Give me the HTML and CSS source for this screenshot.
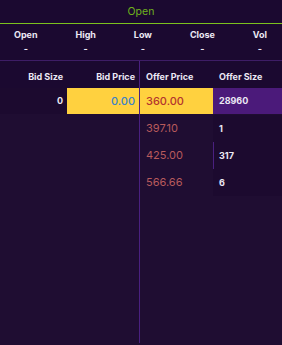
FILE: index.html
```html
<!DOCTYPE html>
<html lang="en">

<head>
    <meta charset="UTF-8">
    <meta name="viewport" content="width=device-width, initial-scale=1.0">
    <title>Order book</title>
    <link rel="stylesheet" href="styles.css">
</head>

<body>
    <div class="panel">
        <div class="status">Open</div>

        <div class="ohlc">
            <div class="stat"><span class="stat-label">Open</span><span class="stat-value">-</span></div>
            <div class="stat"><span class="stat-label">High</span><span class="stat-value">-</span></div>
            <div class="stat"><span class="stat-label">Low</span><span class="stat-value">-</span></div>
            <div class="stat"><span class="stat-label">Close</span><span class="stat-value">-</span></div>
            <div class="stat"><span class="stat-label">Vol</span><span class="stat-value">-</span></div>
        </div>

        <div class="book">
            <div class="side bids">
                <div class="head">Bid Size</div>
                <div class="head">Bid Price</div>

                <div class="cell size">0</div>
                <div class="cell price best">0.00</div>
            </div>

            <div class="side offers">
                <div class="head">Offer Price</div>
                <div class="head">Offer Size</div>

                <div class="cell price best">360.00</div>
                <div class="cell size best">28960</div>

                <div class="cell price">397.10</div>
                <div class="cell size">1</div>

                <div class="cell price">425.00</div>
                <div class="cell size active">317</div>

                <div class="cell price">566.66</div>
                <div class="cell size">6</div>
            </div>
        </div>
    </div>
</body>

</html>
```

FILE: styles.css
```css
* {
    margin: 0;
    padding: 0;
    box-sizing: border-box;
}

body {
    background: #1f0d32;
    color: #ece8f4;
    font-family: 'Inter', 'Roboto', sans-serif;
    width: 282px;
    height: 345px;
    overflow: hidden;
}

.panel {
    display: flex;
    flex-direction: column;
    height: 343px;
}

.status {
    height: 24px;
    background: #1b0930;
    border-bottom: 1px solid #7cc21e;
    color: #6fb31c;
    font-size: 10.5px;
    text-align: center;
    line-height: 23px;
}

.ohlc {
    display: flex;
    justify-content: space-between;
    height: 37px;
    background: #1b0930;
    border-bottom: 1px solid #3e1d66;
    padding: 0 15px 0 14px;
}

.stat {
    display: flex;
    flex-direction: column;
    align-items: center;
    padding-top: 5px;
}

.stat-label {
    font-size: 9px;
    font-weight: 700;
    line-height: 12px;
}

.stat-value {
    font-size: 9px;
    font-weight: 700;
    line-height: 15px;
}

.book {
    flex: 1;
    display: flex;
}

.side {
    display: grid;
    grid-auto-rows: 27px;
    align-content: start;
}

.bids {
    width: 140px;
    grid-template-columns: 67px 72px;
    border-right: 1px solid #4a2080;
}

.offers {
    flex: 1;
    grid-template-columns: 73px 69px;
}

.head {
    height: 31px;
    background: #1b0930;
    font-size: 9px;
    font-weight: 700;
    line-height: 31px;
}

.bids .head,
.bids .cell {
    text-align: right;
    padding-right: 4px;
}

.offers .head,
.offers .cell {
    padding-left: 6px;
}

.cell {
    font-size: 11px;
    line-height: 27px;
}

.cell.size {
    background: #1c0a2f;
    font-size: 9px;
    font-weight: 700;
}

.cell.price {
    color: #b85a5c;
}

.bids .cell {
    height: 26px;
    line-height: 26px;
}

.cell.price.best {
    background: #ffd13f;
    color: #b3342e;
    font-weight: 500;
    height: 26px;
    line-height: 26px;
}

.bids .cell.price.best {
    color: #3a82c9;
}

.cell.size.best {
    background: #4b1a7a;
    height: 26px;
    line-height: 26px;
}

.cell.size.active {
    border-left: 1px solid #4a2080;
    padding-left: 5px;
}
```
